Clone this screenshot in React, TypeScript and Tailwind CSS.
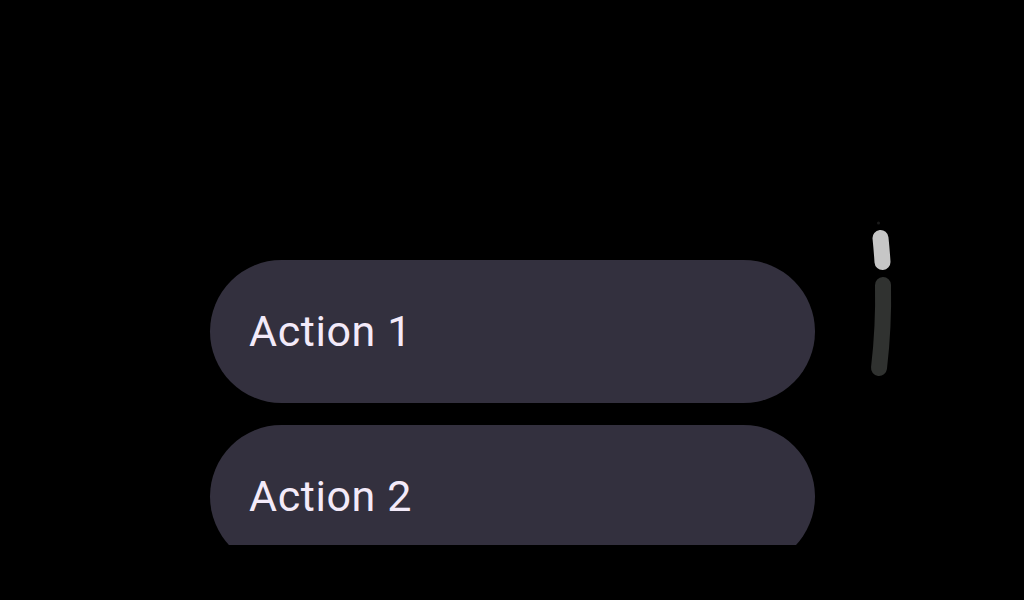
import type { ReactNode } from 'react';

function ActionChip({ children }: { children: ReactNode }) {
  return (
    <button className="flex h-[143px] w-[605px] shrink-0 items-center rounded-full bg-[#33303e] pl-[39px] text-left text-[43px] leading-none tracking-[0.6px] text-[#f3eaf9]">
      {children}
    </button>
  );
}

function ScrollIndicator() {
  return (
    <svg
      className="absolute left-[860px] top-[215px]"
      width="40"
      height="170"
      viewBox="0 0 40 170"
      fill="none"
    >
      <circle cx="18.5" cy="8" r="1.5" fill="#1a1a1a" />
      <path d="M20.5 23 A600 600 0 0 1 22.5 47" stroke="#c6c6c6" strokeWidth="16" strokeLinecap="round" />
      <path d="M23 70 A600 600 0 0 1 19 153" stroke="#303230" strokeWidth="16" strokeLinecap="round" />
    </svg>
  );
}

export default function App() {
  return (
    <div
      className="relative h-[600px] w-[1024px] overflow-hidden bg-black"
      style={{ fontFamily: 'Roboto, "Noto Sans", sans-serif' }}
    >
      <div className="flex h-[545px] flex-col gap-[22px] overflow-hidden pl-[210px] pt-[260px]">
        <ActionChip>Action 1</ActionChip>
        <ActionChip>Action 2</ActionChip>
      </div>
      <ScrollIndicator />
    </div>
  );
}
